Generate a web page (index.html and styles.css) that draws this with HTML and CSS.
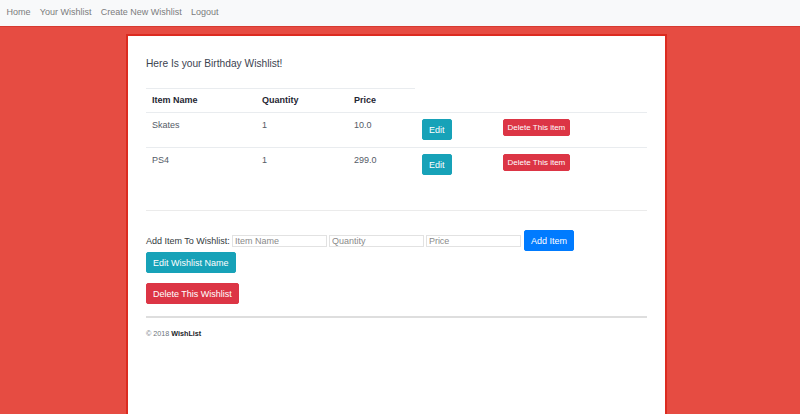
FILE: index.html
```html
<!DOCTYPE html>
<html lang="en">
<head>
<meta charset="utf-8">
<title>WishList</title>
<link rel="stylesheet" href="styles.css">
</head>
<body>
<nav class="navbar">
  <a class="nav-link" href="#">Home</a>
  <a class="nav-link" href="#">Your Wishlist</a>
  <a class="nav-link" href="#">Create New Wishlist</a>
  <a class="nav-link" href="#">Logout</a>
</nav>
<main class="page">
  <section class="card">
    <p class="title">Here Is your Birthday Wishlist!</p>
    <table class="items">
      <colgroup>
        <col class="c1"><col class="c2"><col class="c3"><col class="c4"><col class="c5">
      </colgroup>
      <thead>
        <tr><th>Item Name</th><th>Quantity</th><th>Price</th></tr>
      </thead>
      <tbody>
        <tr>
          <td>Skates</td><td>1</td><td>10.0</td>
          <td><button class="btn btn-info">Edit</button></td>
          <td><button class="btn btn-danger btn-sm">Delete This item</button></td>
        </tr>
        <tr>
          <td>PS4</td><td>1</td><td>299.0</td>
          <td><button class="btn btn-info">Edit</button></td>
          <td><button class="btn btn-danger btn-sm">Delete This item</button></td>
        </tr>
      </tbody>
    </table>
    <hr class="sep">
    <form class="add-form">
      <label class="add-label">Add Item To Wishlist:</label>
      <input class="field" type="text" placeholder="Item Name">
      <input class="field" type="text" placeholder="Quantity">
      <input class="field" type="text" placeholder="Price">
      <button class="btn btn-primary" type="button">Add Item</button>
    </form>
    <div class="actions">
      <button class="btn btn-info">Edit Wishlist Name</button>
      <button class="btn btn-danger btn-delete-list">Delete This Wishlist</button>
    </div>
    <hr class="footer-sep">
    <footer class="footer">© 2018 <strong>WishList</strong></footer>
  </section>
</main>
</body>
</html>
```
FILE: styles.css
```css
* { box-sizing: border-box; }

html, body {
  margin: 0;
  padding: 0;
}

body {
  background: #e64c42;
  font-family: "Liberation Sans", Arial, Helvetica, sans-serif;
  font-size: 9px;
  color: #212529;
  overflow: hidden;
}

.navbar {
  height: 27px;
  background: #f8f9fa;
  border-bottom: 1px solid #d63a30;
  display: flex;
  padding: 0 0 0 2px;
}

.nav-link {
  color: #7b7c7d;
  text-decoration: none;
  line-height: 24px;
  padding: 0 4.6px;
  font-size: 9px;
}

.page {
  padding: 7px 0 0 126px;
}

.card {
  width: 541px;
  min-height: calc(100vh - 34px);
  background: #fff;
  border: 2px solid #dc2b20;
  border-bottom: none;
  padding: 20px 18px 0 18px;
}

.title {
  margin: 0 0 17px 0;
  font-size: 10.2px;
  line-height: 15px;
  color: #3b4250;
}

.items {
  width: 501px;
  border-collapse: separate;
  border-spacing: 0;
  table-layout: fixed;
}

.c1 { width: 110px; }
.c2 { width: 92px; }
.c3 { width: 67px; }
.c4 { width: 82px; }
.c5 { width: 150px; }

.items th {
  text-align: left;
  font-weight: bold;
  color: #1f2633;
  border-top: 1px solid #e9ecef;
  padding: 6px 6px 6px 6px;
  line-height: 11px;
}

.items td {
  border-top: 1px solid #e9ecef;
  padding: 6px 6px 7px 6px;
  vertical-align: top;
  line-height: 12px;
  height: 35px;
  color: #545b66;
}

.items td:nth-child(4) {
  padding-left: 7px;
}

.btn {
  font-family: inherit;
  font-size: 9px;
  line-height: 12px;
  padding: 3.5px 6px;
  border: 1px solid transparent;
  border-radius: 2px;
  color: #fff;
  cursor: pointer;
  display: inline-block;
  margin: 0;
}

.btn-info {
  background: #17a2b8;
  border-color: #17a2b8;
}

.btn-danger {
  background: #dc3545;
  border-color: #dc3545;
}

.btn-primary {
  background: #007bff;
  border-color: #007bff;
}

.btn-sm {
  font-size: 8px;
  line-height: 11px;
  padding: 2px 3.6px;
}

.sep {
  margin: 28px 0 0 0;
  border: none;
  border-top: 1px solid #ebebeb;
  height: 0;
}

.add-form {
  margin-top: 19px;
  display: flex;
  align-items: center;
  gap: 2px;
  height: 21px;
}

.add-label {
  color: #343a40;
  line-height: 12px;
  margin-right: 0;
}

.field {
  width: 95px;
  height: 12px;
  border: 1px solid #e2e2e2;
  padding: 0 2px;
  font-family: inherit;
  font-size: 9px;
  color: #495057;
  background: #fff;
  outline: none;
  margin: 0;
}

.field::placeholder {
  color: #8a8a8a;
}

.btn-primary {
  margin-left: 1px;
}

.actions {
  display: flex;
  flex-direction: column;
  align-items: flex-start;
  gap: 10px;
  margin-top: 1px;
}

.footer-sep {
  margin: 12px 0 0 0;
  border: none;
  border-top: 2px solid #dedede;
  height: 0;
}

.footer {
  margin-top: 11px;
  font-size: 7.2px;
  line-height: 10px;
  color: #6c757d;
}

.footer strong {
  color: #212529;
}
```
